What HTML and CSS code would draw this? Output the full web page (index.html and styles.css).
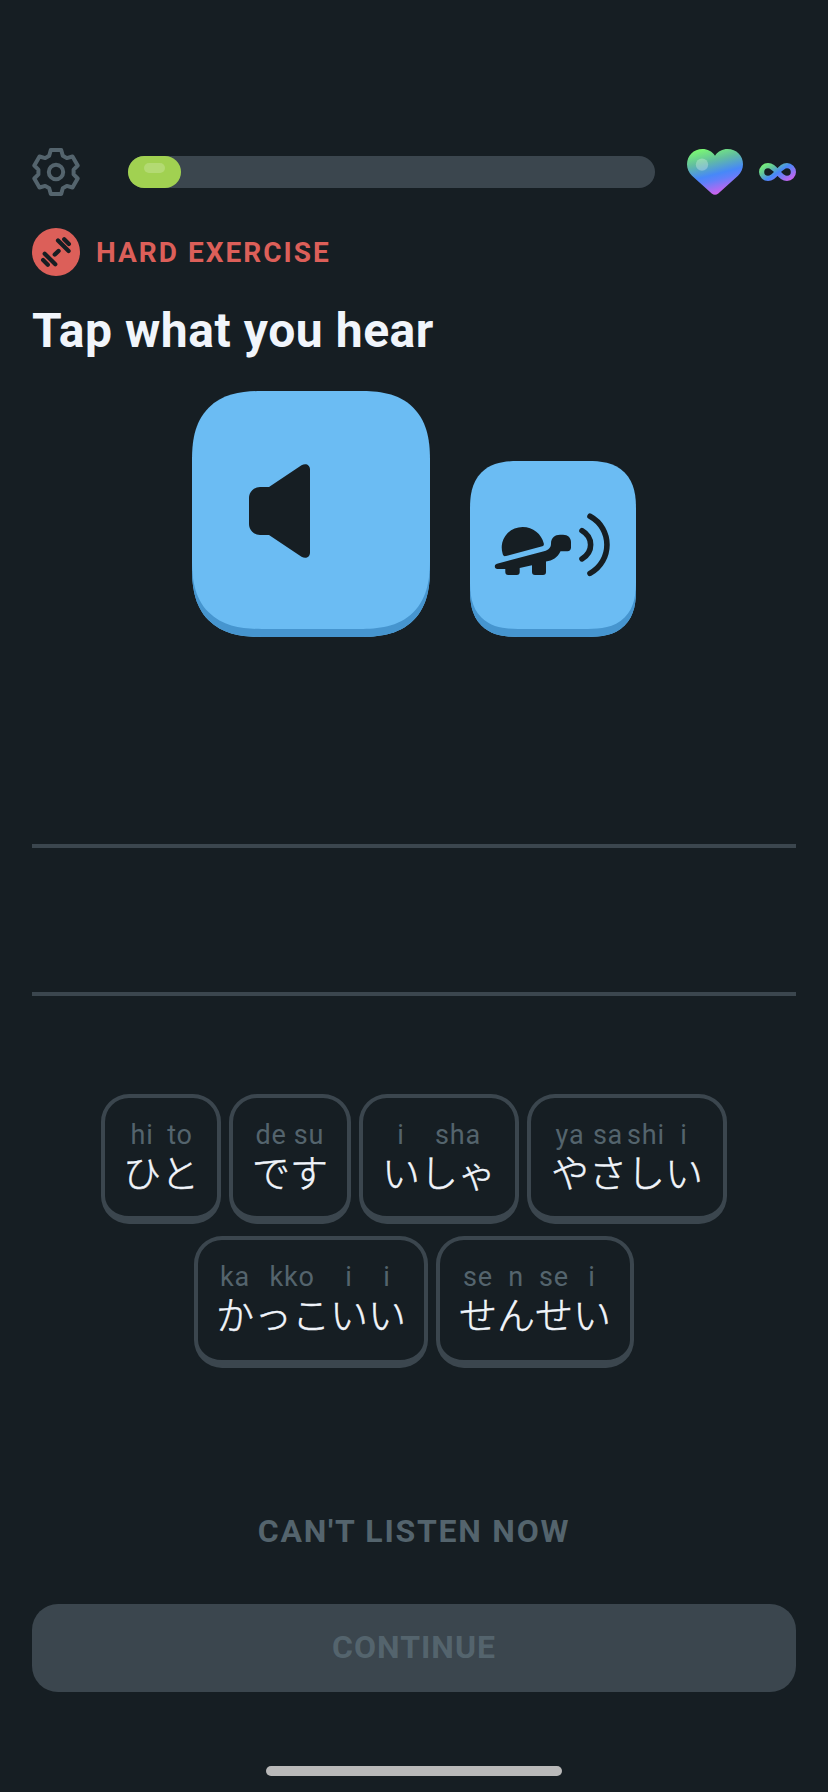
FILE: index.html
```html
<!DOCTYPE html>
<html lang="en">
<head>
<meta charset="utf-8">
<title>Tap what you hear</title>
<link rel="stylesheet" href="styles.css">
</head>
<body>
<main class="screen">
  <header class="topbar">
    <svg class="gear" viewBox="-24 -24 48 48" aria-label="Settings">
      <path d="M-5.2-22H5.2L6.8-16.3L10.8-13.9L16.5-15.5L21.7-6.5L17.6-2.4V2.4L21.7 6.5L16.5 15.5L10.8 13.9L6.8 16.3L5.2 22H-5.2L-6.8 16.3L-10.8 13.9L-16.5 15.5L-21.7 6.5L-17.6 2.4V-2.4L-21.7-6.5L-16.5-15.5L-10.8-13.9L-6.8-16.3Z"/>
      <circle r="7.2"/>
    </svg>
    <div class="progress"><div class="progress-fill"><div class="progress-shine"></div></div></div>
    <svg class="heart" viewBox="0 0 56 46" aria-label="Hearts">
      <defs><linearGradient id="hg" gradientUnits="userSpaceOnUse" x1="12" y1="0" x2="24" y2="46">
        <stop offset="0" stop-color="#7cfb70"/><stop offset=".3" stop-color="#62bea0"/><stop offset=".6" stop-color="#4788f8"/><stop offset=".72" stop-color="#6080fa"/><stop offset="1" stop-color="#ca63ee"/>
      </linearGradient></defs>
      <path fill="url(#hg)" d="M28 6.7C24.800 2.200 20.500 0 15.500 0C6.500 0 0 6.700 0 15.300C0 20 1.800 23.700 5 26.800L24.700 44.600Q28 47 31.300 44.600L51 26.800C54.200 23.700 56 20 56 15.300C56 6.700 49.500 0 40.500 0C35.500 0 31.200 2.200 28 6.700Z"/>
      <circle cx="15" cy="15.600" r="6.200" fill="#fff" fill-opacity=".28"/>
    </svg>
    <svg class="infinity" viewBox="0 0 37 18" aria-label="Unlimited">
      <defs><linearGradient id="ig" gradientUnits="userSpaceOnUse" x1="8" y1="-3" x2="24" y2="22">
        <stop offset="0" stop-color="#7cfb70"/><stop offset=".3" stop-color="#62c59c"/><stop offset=".55" stop-color="#4788f8"/><stop offset="1" stop-color="#ca63ee"/>
      </linearGradient></defs>
      <path fill="none" stroke="url(#ig)" stroke-width="5.200" d="M18.500 9C14.500 4.500 12.500 2.600 9 2.600A6.400 6.400 0 0 0 9 15.400C12.500 15.400 14.500 13.500 18.500 9S24.500 2.600 28 2.600A6.400 6.400 0 0 1 28 15.400C24.500 15.400 22.500 13.500 18.500 9Z"/>
    </svg>
  </header>

  <div class="badge">
    <svg class="badge-icon" viewBox="0 0 48 48">
      <circle cx="24" cy="24" r="24"/>
      <path d="M22.800 26.500L26.500 23" stroke-width="4.400"/>
      <path d="M26 12.400L36.600 23M12.700 25.700L23.300 36.300" stroke-width="4.200"/>
      <path d="M32.200 11.200L36.900 15.900M11.100 32L15.800 36.700" stroke-width="4.200"/>
    </svg>
    <span class="badge-text">HARD EXERCISE</span>
  </div>

  <h1 class="title">Tap what you hear</h1>

  <div class="audio">
    <button class="play play-normal" aria-label="Play">
      <svg viewBox="0 0 238 238"><path d="M68 96H77L109.500 74.300C113.500 71.800 118 73.600 118 78.500V161.500C118 166.400 113.500 168.200 109.500 165.700L77 144H68A11 11 0 0 1 57 133V107A11 11 0 0 1 68 96Z"/></svg>
    </button>
    <button class="play play-slow" aria-label="Play slowly">
      <svg viewBox="0 0 166 168">
        <path d="M36 95C34 95.500 33.200 94.700 32.700 93C31.500 89 31.400 85 32.300 81.500C35 72 43 66 52.700 66C63 66 71.500 73 73.800 82.500C74 84 73.700 84.900 72.300 85.300Z"/>
        <path d="M27 102.800L74 90.200C79 88.800 81 86.500 81 82.500C81 77 85 73.800 90 73.800H93C98 73.800 101 77 101 81V86.500C101 88.800 99.500 90.200 97.500 90.200H90.500C87.500 96.500 82.500 99.600 76 100.500V111A3 3 0 0 1 73 114H65A3 3 0 0 1 62 111V104.200L49.700 107V111A3 3 0 0 1 46.700 114H38.300A3 3 0 0 1 35.300 111V108H27.500C24.200 108 23.800 103.700 27 102.800Z"/>
        <path class="wave" d="M112 69.700C123.500 76.500 123.500 91 112 97.800M120 55.300C142.600 67.500 142.600 100 120 112.400"/>
      </svg>
    </button>
  </div>

  <div class="answer"><div class="answer-line"></div><div class="answer-line"></div></div>

  <div class="bank" lang="ja">
    <div class="bank-row bank-row-first">
      <div class="tile"><span class="syl"><i>hi</i><b>ひ</b></span><span class="syl"><i>to</i><b>と</b></span></div>
      <div class="tile"><span class="syl"><i>de</i><b>で</b></span><span class="syl"><i>su</i><b>す</b></span></div>
      <div class="tile"><span class="syl"><i>i</i><b>い</b></span><span class="syl syl-wide"><i>sha</i><b>しゃ</b></span></div>
      <div class="tile"><span class="syl"><i>ya</i><b>や</b></span><span class="syl"><i>sa</i><b>さ</b></span><span class="syl"><i>shi</i><b>し</b></span><span class="syl"><i>i</i><b>い</b></span></div>
    </div>
    <div class="bank-row bank-row-second">
      <div class="tile"><span class="syl"><i>ka</i><b>か</b></span><span class="syl syl-wide"><i>kko</i><b>っこ</b></span><span class="syl"><i>i</i><b>い</b></span><span class="syl"><i>i</i><b>い</b></span></div>
      <div class="tile"><span class="syl"><i>se</i><b>せ</b></span><span class="syl"><i>n</i><b>ん</b></span><span class="syl"><i>se</i><b>せ</b></span><span class="syl"><i>i</i><b>い</b></span></div>
    </div>
  </div>

  <footer class="footer">
    <button class="skip">CAN'T LISTEN NOW</button>
    <button class="continue">CONTINUE</button>
    <div class="home"></div>
  </footer>
</main>
</body>
</html>
```
FILE: styles.css
```css
* { box-sizing: border-box; }
body { margin: 0; background: #161e23; font-family: Roboto, "Noto Sans CJK JP", sans-serif; }
button { border: 0; padding: 0; background: none; font: inherit; }
svg { display: block; flex: none; }

.screen { width: 828px; height: 1792px; padding: 148px 32px 0; display: flex; flex-direction: column; overflow: hidden; }

.topbar { display: flex; align-items: center; height: 48px; }
.gear { width: 48px; height: 48px; fill: none; stroke: #54646d; stroke-width: 4; stroke-linejoin: round; }
.progress { width: 527px; height: 32px; margin-left: 48px; border-radius: 16px; background: #3b464e; }
.progress-fill { width: 53px; height: 32px; padding: 7px 16px; border-radius: 16px; background: #a1d151; }
.progress-shine { width: 21px; height: 10px; border-radius: 5px; background: #b3da73; }
.heart { width: 56px; height: 46px; margin-left: 32px; }
.infinity { width: 37px; height: 18px; margin-left: 16px; }

.badge { display: flex; align-items: center; gap: 16px; height: 48px; margin-top: 32px; }
.badge-icon { width: 48px; height: 48px; fill: #dc5f59; }
.badge-icon path { stroke: #161e23; stroke-linecap: round; }
.badge-text { padding-top: 1px; font-size: 28px; line-height: 48px; font-weight: 700; letter-spacing: 2px; color: #dc5f59; white-space: nowrap; }

.title { margin: 27px 0 0; height: 56px; font-size: 48px; line-height: 56px; font-weight: 700; letter-spacing: .55px; color: #f1f5fb; white-space: nowrap; }

.audio { display: flex; justify-content: center; align-items: flex-end; gap: 40px; height: 246px; margin-top: 32px; }
.play { background: #6bbcf3; box-shadow: inset 0 -8px #4695cf; fill: #161e23; }
.play-normal { width: 238px; height: 246px; border-radius: 58px; padding-bottom: 8px; }
.play-slow { width: 166px; height: 176px; border-radius: 40px; padding-bottom: 8px; }
.wave { fill: none; stroke: #161e23; stroke-width: 5.6; stroke-linecap: round; }
@supports (corner-shape: squircle) {
  .play { corner-shape: superellipse(1.35); }
  .play-normal { border-radius: 70px; }
  .play-slow { border-radius: 48px; }
}

.answer { display: flex; flex-direction: column; gap: 144px; margin-top: 207px; }
.answer-line { height: 4px; background: #3b464e; }

.bank { display: flex; flex-direction: column; gap: 12px; margin-top: 98px; }
.bank-row { display: grid; justify-content: center; gap: 8px; }
.bank-row-first { grid-template-columns: 120px 122px 160px 200px; grid-template-rows: 130px; }
.bank-row-second { grid-template-columns: 234px 198px; grid-template-rows: 132px; }
.tile { display: flex; justify-content: center; padding-top: 22px; border: 4px solid #3b464e; border-bottom-width: 8px; border-radius: 28px; }
.syl { width: 38px; display: flex; flex-direction: column; align-items: center; }
.syl-wide { width: 76px; }
.syl i { font-style: normal; font-size: 27px; line-height: 30px; letter-spacing: .8px; color: #54646d; white-space: nowrap; }
.syl b { font: 300 38px/42px "Noto Sans CJK JP", sans-serif; color: #f1f5fb; -webkit-text-stroke: .5px #f1f5fb; white-space: nowrap; }

.footer { display: flex; flex-direction: column; align-items: center; margin-top: 133px; }
.skip { height: 60px; font-size: 32px; line-height: 60px; font-weight: 700; letter-spacing: 1.75px; color: #54646d; white-space: nowrap; }
.continue { width: 764px; height: 88px; margin-top: 43px; border-radius: 26px; background: #3b464e; color: #54646d; font-size: 32px; line-height: 86px; padding-bottom: 2px; font-weight: 700; letter-spacing: 1px; }
.home { width: 296px; height: 10px; margin-top: 74px; border-radius: 5px; background: #b9b9b9; }
```
